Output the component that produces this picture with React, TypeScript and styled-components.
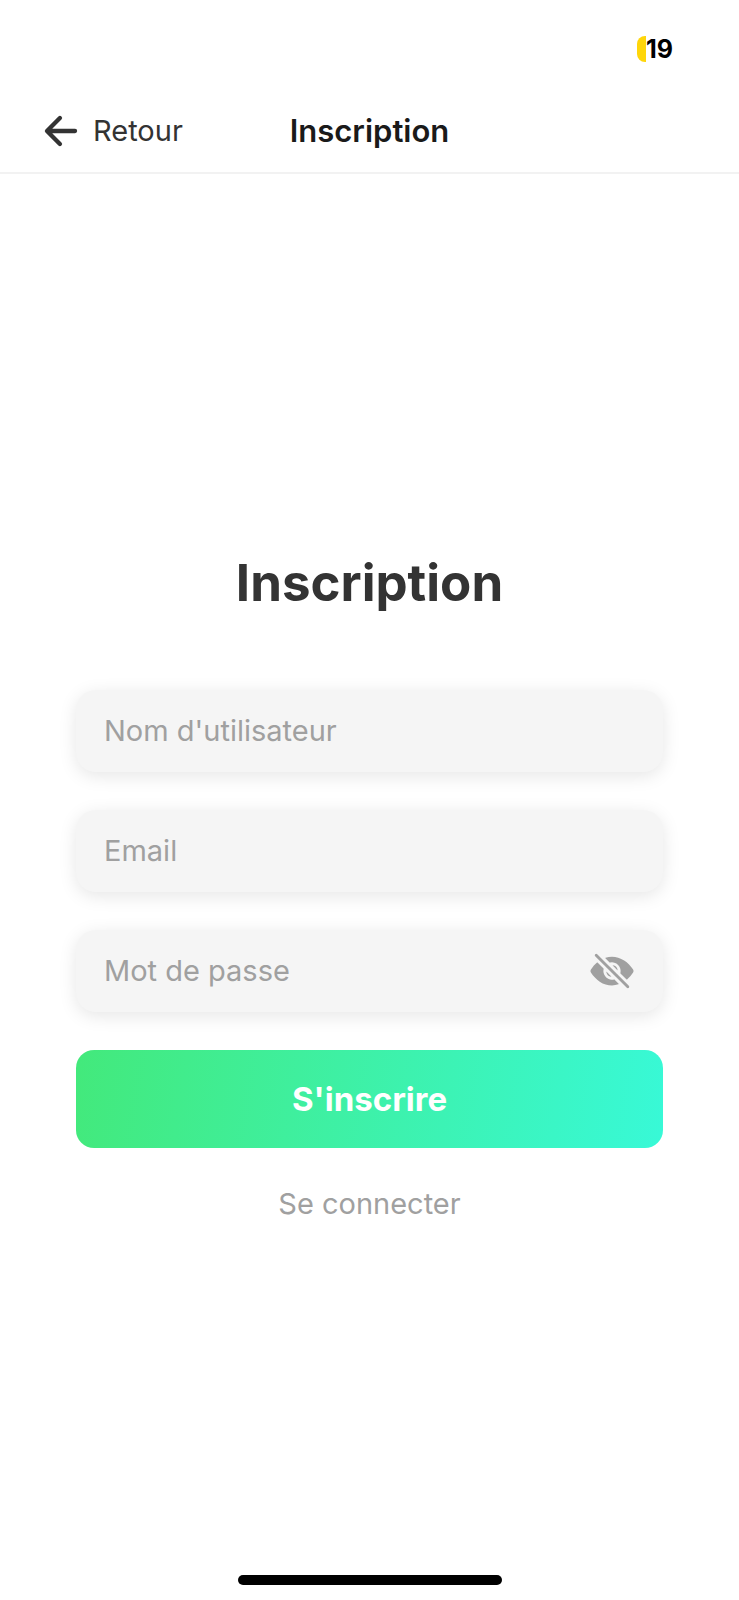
import React, { useState } from "react";
import styled, { createGlobalStyle } from "styled-components";
import { IoArrowBack, IoEye, IoEyeOff } from "react-icons/io5";

const GlobalStyle = createGlobalStyle`
  *, *::before, *::after { box-sizing: border-box; }
  body {
    margin: 0;
    background: #ffffff;
    font-family: Inter, "Liberation Sans", sans-serif;
    -webkit-font-smoothing: antialiased;
  }
`;

const Screen = styled.div`
  display: flex;
  flex-direction: column;
  min-height: 100vh;
`;

const StatusBar = styled.div`
  display: flex;
  justify-content: flex-end;
  align-items: center;
  height: 90px;
  padding: 8px 66px 0 0;
`;

const Battery = styled.div`
  display: flex;
  align-items: center;
  color: #000000;
  font-size: 25px;
  font-weight: 700;
  line-height: 28px;
`;

const BatteryFill = styled.span`
  width: 9px;
  height: 26px;
  border-radius: 8px 0 0 8px;
  background: #ffd60a;
`;

const NavBar = styled.header`
  display: grid;
  grid-template-columns: 1fr auto 1fr;
  align-items: center;
  height: 84px;
  padding: 0 38px;
  border-bottom: 2px solid #f2f2f2;
`;

const BackButton = styled.button`
  display: flex;
  align-items: center;
  justify-self: start;
  gap: 9px;
  padding: 0;
  border: 0;
  background: none;
  color: #333333;
  font: inherit;
  font-size: 29px;
  line-height: 36px;
  cursor: pointer;
`;

const NavTitle = styled.div`
  color: #1a1a1a;
  font-size: 31px;
  font-weight: 600;
  line-height: 36px;
`;

const Main = styled.main`
  flex: 1;
  display: flex;
  flex-direction: column;
  justify-content: center;
  padding: 0 76px;
`;

const Title = styled.h1`
  margin: 0 0 76px;
  color: #333333;
  font-size: 51px;
  font-weight: 700;
  line-height: 62px;
  text-align: center;
`;

const Form = styled.form`
  display: flex;
  flex-direction: column;
  gap: 38px;
`;

const Field = styled.div`
  display: flex;
  align-items: center;
  height: 82px;
  padding: 0 28px;
  border-radius: 20px;
  background: #f5f5f5;
  box-shadow: 0 4px 18px rgba(0, 0, 0, 0.1);
`;

const FieldInput = styled.input`
  flex: 1;
  min-width: 0;
  padding: 0;
  border: 0;
  outline: 0;
  background: none;
  color: #333333;
  font: inherit;
  font-size: 29px;
  line-height: 36px;

  &::placeholder {
    color: #a0a0a0;
    opacity: 1;
  }
`;

const EyeButton = styled.button`
  display: flex;
  padding: 0;
  border: 0;
  background: none;
  color: #a0a0a0;
  cursor: pointer;
`;

const SubmitButton = styled.button`
  height: 98px;
  border: 0;
  border-radius: 18px;
  background: linear-gradient(99deg, #43e97b, #38f9d7);
  color: #ffffff;
  font: inherit;
  font-size: 33px;
  font-weight: 700;
  line-height: 40px;
  cursor: pointer;
`;

const LoginLink = styled.a`
  align-self: center;
  color: #a0a0a0;
  font-size: 29px;
  line-height: 36px;
  text-decoration: none;
`;

/* System gesture bar, floating over the bottom of the screen */
const HomeArea = styled.div`
  position: fixed;
  right: 0;
  bottom: 15px;
  left: 0;
  display: flex;
  justify-content: center;
  pointer-events: none;
`;

const HomeIndicator = styled.div`
  width: 264px;
  height: 10px;
  border-radius: 5px;
  background: #000000;
`;

export default function App() {
  const [visible, setVisible] = useState(false);

  return (
    <>
      <GlobalStyle />
      <Screen>
        <StatusBar>
          <Battery>
            <BatteryFill />
            19
          </Battery>
        </StatusBar>
        <NavBar>
          <BackButton type="button">
            <IoArrowBack size={46} />
            Retour
          </BackButton>
          <NavTitle>Inscription</NavTitle>
        </NavBar>
        <Main>
          <Title>Inscription</Title>
          <Form onSubmit={(e) => e.preventDefault()}>
            <Field>
              <FieldInput
                type="text"
                aria-label="Nom d'utilisateur"
                placeholder="Nom d'utilisateur"
                autoComplete="username"
              />
            </Field>
            <Field>
              <FieldInput type="email" aria-label="Email" placeholder="Email" autoComplete="email" />
            </Field>
            <Field>
              <FieldInput
                type={visible ? "text" : "password"}
                aria-label="Mot de passe"
                placeholder="Mot de passe"
                autoComplete="new-password"
              />
              <EyeButton
                type="button"
                aria-label={visible ? "Masquer le mot de passe" : "Afficher le mot de passe"}
                onClick={() => setVisible(!visible)}
              >
                {visible ? <IoEye size={46} /> : <IoEyeOff size={46} />}
              </EyeButton>
            </Field>
            <SubmitButton type="submit">S'inscrire</SubmitButton>
            <LoginLink href="#connexion">Se connecter</LoginLink>
          </Form>
        </Main>
        <HomeArea>
          <HomeIndicator />
        </HomeArea>
      </Screen>
    </>
  );
}
